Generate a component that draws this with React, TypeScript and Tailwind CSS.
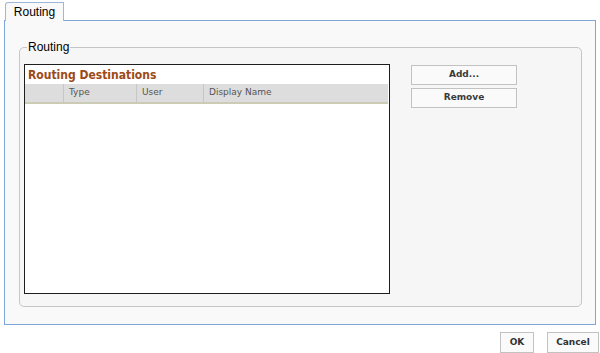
const uiFont = { fontFamily: '"DejaVu Sans", Verdana, sans-serif' }

function HeaderCell({ label, className }: { label?: string; className: string }) {
  return (
    <div className={`h-full flex items-center pl-[5px] text-[9px] text-[#555] border-l border-[#c6c6c6] first:border-l-0 ${className}`}>
      {label}
    </div>
  )
}

function SideButton({ label }: { label: string }) {
  return (
    <button
      className="w-[106px] h-[20px] border border-[#c2c2c2] bg-[#fafafa] text-[9px] font-bold text-[#3a3a3a] cursor-pointer"
      style={uiFont}
    >
      {label}
    </button>
  )
}

export default function App() {
  return (
    <div className="w-[600px] h-[353px] bg-white overflow-hidden" style={{ fontFamily: '"Liberation Sans", Arial, sans-serif' }}>
      {/* tab strip */}
      <div className="flex pl-[5px] pt-[2px]">
        <div className="relative z-10 -mb-px w-[59px] h-[19px] border border-b-0 border-[#9fb7d6] rounded-tl-[3px] bg-[#f9f9f9] flex items-center justify-center text-[12px] text-black">
          Routing
        </div>
      </div>

      {/* panel */}
      <div className="ml-[4px] w-[592px] h-[305px] border border-[#7fa6d8] bg-[#f9f9f9] pl-[14px] pt-[19px]">
        <fieldset className="w-[563px] h-[267px] border border-[#c6c6c6] rounded-[5px] bg-[#f6f6f6] pl-[4px] pt-[10px]">
          <legend className="ml-[3px] px-[1px] text-[12px] leading-[14px] text-black">Routing</legend>
          <div className="flex items-start">
            {/* routing destinations list */}
            <div className="w-[366px] h-[230px] border border-[#1e1e1e] bg-white flex flex-col">
              <div className="h-[19px] flex items-center pl-[3px] text-[12px] font-bold text-[#9c4a17]" style={{ fontFamily: '"DejaVu Sans Condensed", "DejaVu Sans", sans-serif' }}>
                Routing Destinations
              </div>
              <div className="h-[20px] flex bg-[#dddddd] border-b-2 border-[#cbcbb6] mr-px" style={uiFont}>
                <HeaderCell className="w-[38px]" />
                <HeaderCell label="Type" className="w-[73px]" />
                <HeaderCell label="User" className="w-[67px]" />
                <HeaderCell label="Display Name" className="flex-1" />
              </div>
              <div className="flex-1" />
            </div>

            {/* actions */}
            <div className="ml-[21px] mt-[1px] flex flex-col gap-[3px]">
              <SideButton label="Add..." />
              <SideButton label="Remove" />
            </div>
          </div>
        </fieldset>
      </div>

      {/* dialog buttons */}
      <div className="flex justify-end gap-[13px] pr-[1px] mt-[7px]" style={uiFont}>
        <button className="w-[34px] h-[21px] border border-[#c2c2c2] bg-[#fafafa] text-[9px] font-bold text-[#333] cursor-pointer">OK</button>
        <button className="w-[52px] h-[21px] border border-[#c2c2c2] bg-[#fafafa] text-[9px] font-bold text-[#333] cursor-pointer">Cancel</button>
      </div>
    </div>
  )
}
